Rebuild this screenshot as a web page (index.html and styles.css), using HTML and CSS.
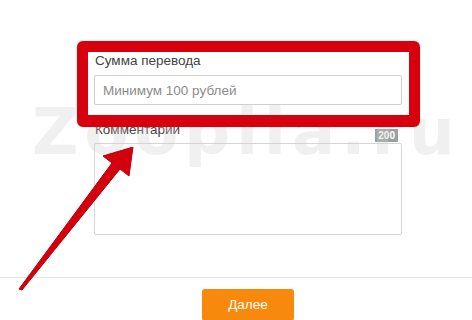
FILE: index.html
```html
<!DOCTYPE html>
<html lang="ru">
<head>
<meta charset="utf-8">
<link rel="stylesheet" href="styles.css">
</head>
<body>
<div class="page">
  <form class="form">
    <label class="label label-sum">Сумма перевода</label>
    <input class="input" type="text" placeholder="Минимум 100 рублей">
    <div class="comment-row">
      <label class="label">Комментарии</label>
      <span class="counter">200</span>
    </div>
    <textarea class="textarea"></textarea>
  </form>
  <div class="footer">
    <button class="btn" type="button">Далее</button>
  </div>

  <div class="watermark">Zoopila.ru</div>
  <div class="highlight"></div>
  <svg class="arrow" width="140" height="150" viewBox="0 0 140 150">
    <polygon points="19,142 112,16 103,9 133,0 129,29 120,22 22,143" fill="#d3000d" stroke="#b8000a" stroke-width="1" stroke-linejoin="round"/>
  </svg>
</div>
</body>
</html>
```
FILE: styles.css
```css
* { box-sizing: border-box; }
html, body { margin: 0; padding: 0; background: #fff; }
body {
  font-family: "Liberation Sans", Arial, sans-serif;
  color: #333;
  width: 472px;
  height: 320px;
  overflow: hidden;
}
.page {
  position: relative;
  width: 472px;
  height: 320px;
}
.form {
  display: flex;
  flex-direction: column;
  width: 308px;
  margin-left: 94px;
  padding-top: 52px;
}
.label {
  font-size: 13.5px;
  line-height: 18px;
  color: #444;
  padding-left: 1px;
}
.label-sum { margin-bottom: 5px; }
.input {
  height: 30px;
  border: 1px solid #cfcfcf;
  border-radius: 2px;
  padding: 0 8px;
  font-family: inherit;
  font-size: 13.5px;
  color: #333;
  outline: none;
}
.input::placeholder { color: #8c8c8c; }
.comment-row {
  display: flex;
  justify-content: space-between;
  align-items: flex-start;
  height: 22px;
  margin-top: 16px;
}
.counter {
  align-self: flex-end;
  margin-right: 4px;
  margin-bottom: 1px;
  background: #9aa2a1;
  color: #fff;
  font-size: 10px;
  font-weight: bold;
  line-height: 13px;
  padding: 0 3px;
}
.textarea {
  height: 92px;
  border: 1px solid #d6d6d6;
  border-radius: 2px;
  resize: none;
  outline: none;
}
.footer {
  margin-top: 42px;
  border-top: 1px solid #e4e4e4;
  display: flex;
  justify-content: center;
  padding-top: 11px;
  padding-left: 24px;
}
.btn {
  width: 92px;
  height: 32px;
  border: none;
  border-radius: 3px;
  background: #f7890c;
  color: #fff;
  font-family: inherit;
  font-size: 13.5px;
  padding: 0 0 2px;
}
.watermark {
  position: absolute;
  left: 32px;
  top: 97px;
  font-family: "DejaVu Sans", sans-serif;
  font-weight: bold;
  font-size: 64px;
  letter-spacing: 6px;
  line-height: 70px;
  color: rgba(205, 205, 205, 0.3);
  pointer-events: none;
  white-space: nowrap;
}
.highlight {
  position: absolute;
  left: 77px;
  top: 41px;
  width: 343px;
  height: 86px;
  border: 11px solid #d7000e;
  border-bottom-width: 12px;
  border-radius: 6px;
  box-shadow: 0 0 1px rgba(120, 0, 0, 0.6);
}
.arrow {
  position: absolute;
  left: 0;
  top: 147px;
}
```
